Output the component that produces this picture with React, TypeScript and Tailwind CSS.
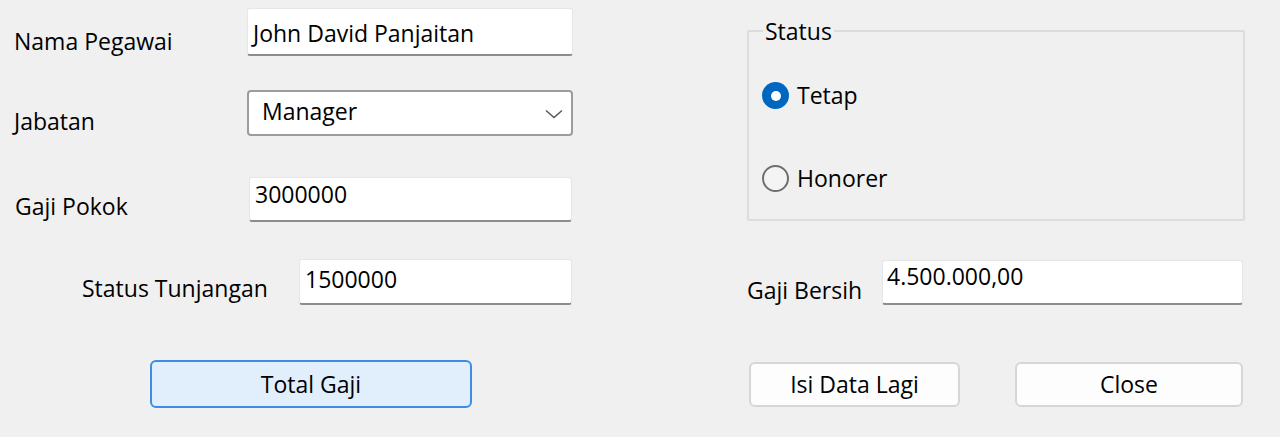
import React from "react";

const font = { fontFamily: '"Open Sans", "Noto Sans", sans-serif' };

function TextBox({ value, className }: { value: string; className: string }) {
    return (
        <div
            className={`bg-white border border-[#e6e6e6] border-b-2 border-b-[#8c8c8c] rounded-[3px] text-[23px] leading-[23px] text-black whitespace-nowrap ${className}`}
        >
            {value}
        </div>
    );
}

function Radio({ label, checked, className }: { label: string; checked?: boolean; className?: string }) {
    return (
        <div className={`flex items-center gap-[8px] ${className ?? ""}`}>
            {checked ? (
                <span className="w-[27px] h-[27px] rounded-full bg-[#0067c0] flex items-center justify-center">
                    <span className="w-[10px] h-[10px] rounded-full bg-white" />
                </span>
            ) : (
                <span className="w-[27px] h-[27px] rounded-full border-2 border-[#6f6f6f] bg-[#f4f4f4]" />
            )}
            <span className="text-[23px] leading-[23px] text-black">{label}</span>
        </div>
    );
}

export default function App() {
    return (
        <div className="w-[1280px] h-[437px] bg-[#f0f0f0] flex overflow-hidden" style={font}>
            {/* Kolom kiri */}
            <div className="w-[747px] flex flex-col">
                <div className="mt-[8px] h-[48px] flex">
                    <div className="w-[247px] pl-[14px] pt-[22px] text-[23px] leading-[23px] text-black">Nama Pegawai</div>
                    <TextBox value="John David Panjaitan" className="w-[326px] h-[48px] pl-[5px] pt-[13px]" />
                </div>

                <div className="mt-[34px] h-[46px] flex">
                    <div className="w-[247px] pl-[14px] pt-[20px] text-[23px] leading-[23px] text-black">Jabatan</div>
                    <div className="w-[326px] h-[46px] bg-white border-2 border-[#9c9c9c] rounded-[4px] flex items-start justify-between pl-[13px] pr-[8px] pt-[8px]">
                        <span className="text-[23px] leading-[23px] text-black">Manager</span>
                        <svg width="18" height="10" viewBox="0 0 18 10" className="mt-[9px]">
                            <path d="M1 1.5 L9 8.5 L17 1.5" fill="none" stroke="#555" strokeWidth="1.4" />
                        </svg>
                    </div>
                </div>

                <div className="mt-[41px] h-[45px] flex">
                    <div className="w-[249px] pl-[15px] pt-[18px] text-[23px] leading-[23px] text-black">Gaji Pokok</div>
                    <TextBox value="3000000" className="w-[323px] h-[45px] pl-[5px] pt-[5px]" />
                </div>

                <div className="mt-[37px] h-[46px] flex">
                    <div className="w-[299px] pl-[82px] pt-[18px] text-[23px] leading-[23px] text-black">Status Tunjangan</div>
                    <TextBox value="1500000" className="w-[273px] h-[46px] pl-[5px] pt-[8px]" />
                </div>

                <button className="mt-[55px] ml-[150px] w-[322px] h-[48px] rounded-[6px] border-2 border-[#3a8ee4] bg-[#e1eefb] text-[23px] leading-[23px] text-black">
                    Total Gaji
                </button>
            </div>

            {/* Kolom kanan */}
            <div className="w-[498px] flex flex-col">
                <div className="relative mt-[30px] h-[191px] border-2 border-[#dcdcdc] rounded-[2px] pl-[13px] pt-[50px]">
                    <span className="absolute left-[14px] top-[-12px] px-[2px] bg-[#f0f0f0] text-[23px] leading-[23px] text-black">Status</span>
                    <Radio label="Tetap" checked />
                    <Radio label="Honorer" className="mt-[56px]" />
                </div>

                <div className="mt-[39px] h-[45px] flex">
                    <div className="w-[135px] pt-[19px] text-[23px] leading-[23px] text-black whitespace-nowrap">Gaji Bersih</div>
                    <TextBox value="4.500.000,00" className="w-[361px] h-[45px] pl-[4px] pt-[4px]" />
                </div>

                <div className="mt-[57px] flex gap-[55px] pl-[2px]">
                    <button className="w-[211px] h-[45px] rounded-[6px] border-2 border-[#d6d6d6] bg-[#fdfdfd] text-[23px] leading-[23px] text-black">
                        Isi Data Lagi
                    </button>
                    <button className="w-[228px] h-[45px] rounded-[6px] border-2 border-[#d6d6d6] bg-[#fdfdfd] text-[23px] leading-[23px] text-black">
                        Close
                    </button>
                </div>
            </div>
        </div>
    );
}
